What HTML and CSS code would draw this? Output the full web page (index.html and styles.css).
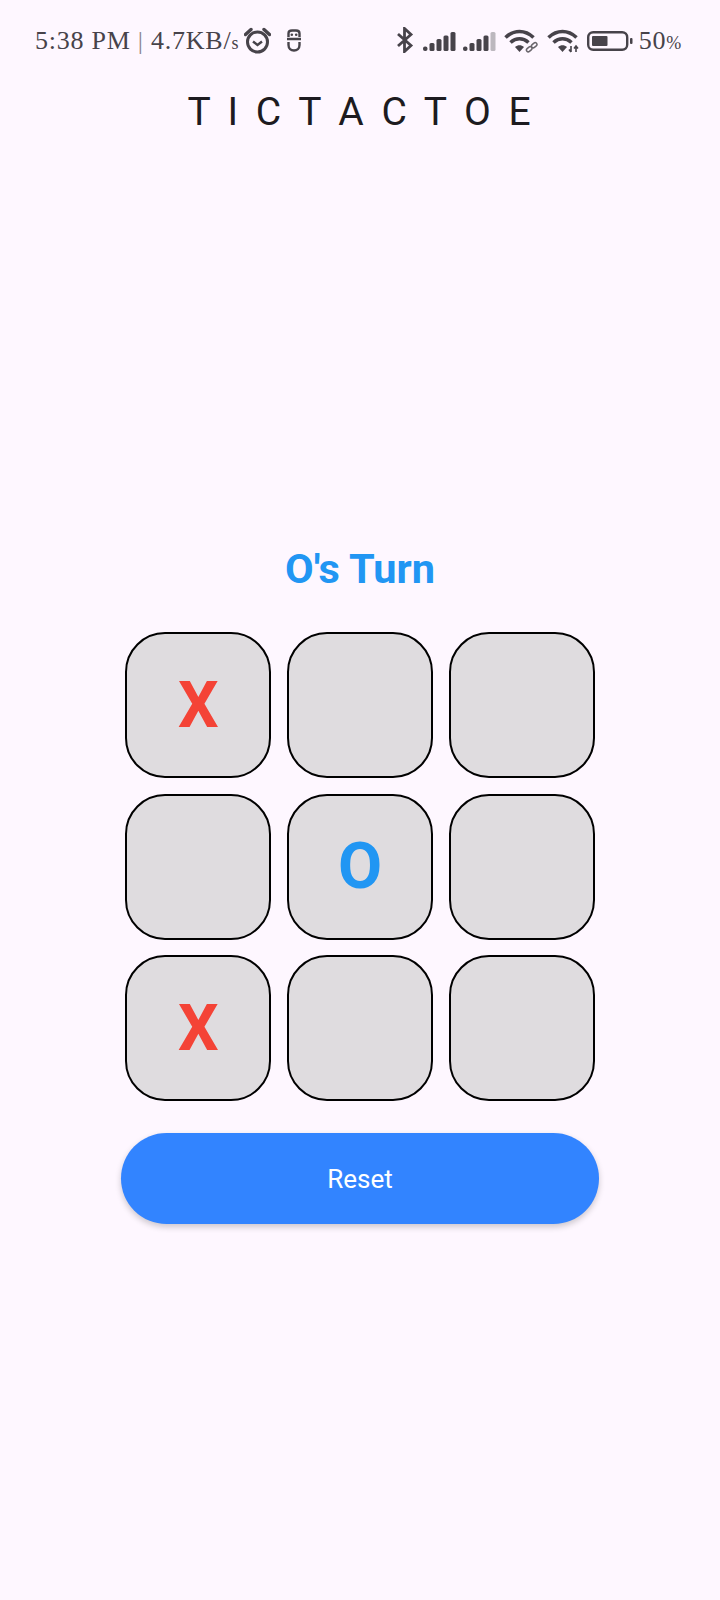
FILE: index.html
```html
<!DOCTYPE html>
<html lang="en">
<head>
<meta charset="utf-8">
<title>Tic Tac Toe</title>
<link rel="stylesheet" href="styles.css">
</head>
<body>
<div class="status">
  <div class="status-group">
    <span class="status-text">5:38 PM <span class="sep">|</span> 4.7KB/<span class="small">s</span></span>
    <svg class="ic-alarm" width="27" height="27" viewBox="0 0 27 27"><circle cx="13.5" cy="15" r="10" fill="none" stroke="#47434a" stroke-width="3"/><path d="M9 14.5l4.5 3.5 4.500-3.500" fill="none" stroke="#47434a" stroke-width="2.400"/><path d="M1.500 7.500L7 2.500M25.500 7.500L20 2.500" stroke="#47434a" stroke-width="3.400" stroke-linecap="round"/></svg>
    <svg class="ic-bot" width="16" height="23" viewBox="0 0 16 23"><path d="M2.500 8V4.500C2.500 2.500 4 1.500 6 1.500h4c2 0 3.500 1 3.500 3V8M1 10h14M2.500 13v3c0 3.500 2.500 5.500 5.500 5.500s5.500-2 5.500-5.500v-3" fill="none" stroke="#47434a" stroke-width="2.400"/><circle cx="5.800" cy="5.800" r="1.300" fill="#47434a"/><circle cx="10.200" cy="5.800" r="1.300" fill="#47434a"/></svg>
  </div>
  <div class="status-group">
    <svg class="ic-bt" width="18" height="26" viewBox="0 0 18 26"><path d="M2 7l13 11.500L8.500 24.500V1.500L15 7.500 2 19" fill="none" stroke="#47434a" stroke-width="2.800"/></svg>
    <svg class="ic-signal" width="33" height="21" viewBox="0 0 33 21"><g fill="#47434a"><rect x="0" y="15.500" width="4.500" height="4.500" rx="2"/><rect x="6.500" y="12" width="5" height="8" rx="1.500"/><rect x="13.500" y="8" width="5" height="12" rx="1.500"/><rect x="20.500" y="4.500" width="5" height="15.500" rx="1.500"/><rect x="27.500" y="1" width="5" height="19" rx="1.500"/></g></svg>
    <svg class="ic-signal2" width="33" height="21" viewBox="0 0 33 21"><g fill="#47434a"><rect x="0" y="15.500" width="4.500" height="4.500" rx="2"/><rect x="6.500" y="12" width="5" height="8" rx="1.500"/><rect x="13.500" y="8" width="5" height="12" rx="1.500"/><rect x="20.500" y="4.500" width="5" height="15.500" rx="1.500"/></g><rect x="27.500" y="1" width="5" height="19" rx="1.500" fill="#bcb8be"/></svg>
    <svg class="ic-wifi" width="34" height="24" viewBox="0 0 34 24"><g fill="none" stroke="#47434a" stroke-width="3.600"><path d="M1.500 8.500C10 .5 21 .5 29.500 8.500"/><path d="M6.500 13.500C12 8.500 19 8.500 24.500 13.500"/></g><path d="M11 18c2.800-2.300 6.200-2.300 9 0L15.500 23z" fill="#47434a"/><g fill="none" stroke="#6a666c" stroke-width="1.500"><rect x="22" y="18.500" width="6" height="3.600" rx="1.800" transform="rotate(-40 25 20)"/><rect x="27" y="14.500" width="6" height="3.600" rx="1.800" transform="rotate(-40 30 16)"/></g></svg>
    <svg class="ic-wifi2" width="34" height="24" viewBox="0 0 34 24"><g fill="none" stroke="#47434a" stroke-width="3.600"><path d="M1.500 8.500C10 .5 21 .5 29.500 8.500"/><path d="M6.500 13.500C12 8.500 19 8.500 24.500 13.500"/></g><path d="M11 18c2.800-2.300 6.200-2.300 9 0L15.500 23z" fill="#47434a"/><path d="M24 17v6M22 20.500l2 2.500M29 17v6M27 19.500l2-2.500 2 2.500" fill="none" stroke="#47434a" stroke-width="1.600"/></svg>
    <svg class="ic-batt" width="46" height="20" viewBox="0 0 46 20"><rect x="1.200" y="1.200" width="39" height="17.600" rx="5" fill="none" stroke="#47434a" stroke-width="2.400"/><rect x="5" y="5" width="15.500" height="10" rx="1" fill="#47434a"/><rect x="43" y="7" width="2.500" height="6" rx="1" fill="#47434a"/></svg>
    <span class="status-text">50<span class="small">%</span></span>
  </div>
</div>

<h1 class="title">T I C T A C T O E</h1>

<main class="game">
  <h2 class="turn">O's Turn</h2>
  <div class="board">
    <div class="cell x">X</div>
    <div class="cell"></div>
    <div class="cell"></div>
    <div class="cell"></div>
    <div class="cell o">O</div>
    <div class="cell"></div>
    <div class="cell x">X</div>
    <div class="cell"></div>
    <div class="cell"></div>
  </div>
  <button class="reset" type="button">Reset</button>
</main>
</body>
</html>
```
FILE: styles.css
```css
* { box-sizing: border-box; }
html, body { margin: 0; padding: 0; }
body {
  width: 720px;
  height: 1600px;
  background: #fef7ff;
  font-family: Roboto, sans-serif;
  overflow: hidden;
}
.status {
  height: 80px;
  padding: 2px 38px 0 35px;
  display: flex;
  justify-content: space-between;
  align-items: center;
  color: #47434a;
}
.status-group { display: flex; align-items: center; }
.status-text {
  font-family: "Liberation Serif", serif;
  font-size: 26px;
  letter-spacing: 0.75px;
  white-space: nowrap;
}
.sep { color: #8b878d; }
.small { font-size: 18px; }
.ic-alarm { margin-left: 5px; margin-top: -2px; }
.ic-bot { margin-left: 15px; margin-top: -2px; }
.ic-bt { margin-right: 9px; margin-top: -2px; }
.ic-signal { margin-right: 7px; }
.ic-signal2 { margin-right: 8px; }
.ic-wifi { margin-right: 9px; margin-top: -1px; }
.ic-wifi2 { margin-right: 6px; margin-top: -1px; }
.ic-batt { margin-right: 6px; margin-top: -1px; }
.title {
  margin: 0;
  height: 66px;
  padding-left: 2px;
  line-height: 64px;
  text-align: center;
  font-size: 39px;
  font-weight: 400;
  color: #1d1b20;
  letter-spacing: 4px;
}
.game {
  display: flex;
  flex-direction: column;
  align-items: center;
  padding-top: 395px;
}
.turn {
  margin: 0 0 35px;
  height: 56px;
  line-height: 56px;
  font-size: 41.500px;
  font-weight: 700;
  color: #2196f3;
}
.board {
  display: grid;
  grid-template-columns: repeat(3, 146.500px);
  grid-auto-rows: 146px;
  gap: 15.500px 15.300px;
}
.cell {
  background: #dfdcdf;
  border: 2px solid #000;
  border-radius: 40px;
  display: flex;
  align-items: center;
  justify-content: center;
  font-size: 64px;
  font-weight: 700;
}
.x { color: #f44336; }
.o { color: #2196f3; }
.reset {
  margin-top: 32px;
  width: 478px;
  height: 91px;
  border: 0;
  border-radius: 46px;
  background: #3284ff;
  color: #fff;
  font-family: Roboto, sans-serif;
  font-size: 26px;
  font-weight: 400;
  box-shadow: 0 3px 6px rgba(0, 0, 0, 0.2);
}
```
